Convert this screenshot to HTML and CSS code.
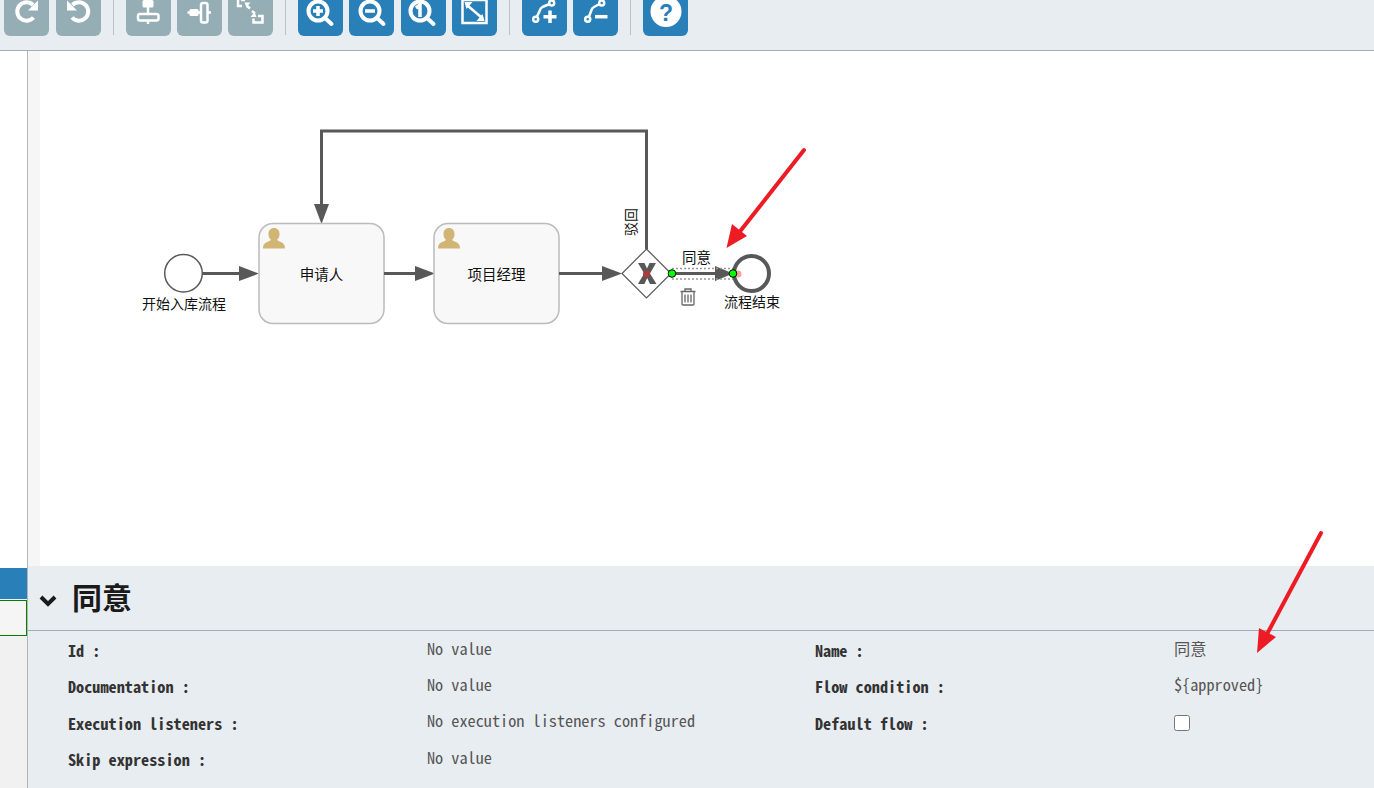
FILE: index.html

```html
<!DOCTYPE html>
<html lang="en">
<head>
    <meta charset="UTF-8">
    <meta name="viewport" content="width=device-width, initial-scale=1.0">
    <title>Process editor</title>
    <link rel="stylesheet" href="styles.css">
</head>

<body>
    <div class="toolbar">
        <button class="btn btn-gray btn-wide-gap">
            <svg viewBox="0 0 45 36"><path class="ic" d="M29.500 17.500a9.200 9.200 0 1 1 -.5-12.500"/><path class="ic-fill" d="M34 0.500v10h-10z"/></svg>
        </button>
        <button class="btn btn-gray">
            <svg viewBox="0 0 45 36"><path class="ic" d="M16 17.500a9.200 9.200 0 1 0 .5-12.500"/><path class="ic-fill" d="M11 0.500v10h10z"/></svg>
        </button>
        <span class="sep"></span>
        <button class="btn btn-gray">
            <svg viewBox="0 0 45 36"><path class="ic-thin" d="M22 0v24" stroke-width="3"/><rect class="ic-fill" x="16.500" y="0" width="11" height="7.500" rx="1.500"/><rect class="ic-gray" x="12" y="14" width="20.500" height="6.500" rx="2"/></svg>
        </button>
        <button class="btn btn-gray">
            <svg viewBox="0 0 45 36"><path class="ic-thin" d="M10.500 12.500h13M31 12.500h3"/><rect class="ic-fill" x="12.500" y="9" width="9" height="7" rx="1.500"/><rect class="ic-gray" x="24" y="3" width="6.500" height="19.500" rx="2"/></svg>
        </button>
        <button class="btn btn-gray">
            <svg viewBox="0 0 45 36"><path class="ic-thin" d="M10 0v6h4M13 0h4"/><path class="ic-thin" d="M30 16h4.500v6.500h-9v-4"/><path class="ic-thin" d="M19 6l3 2.500M24 11l3 2.500" stroke-width="2"/><path class="ic-fill" d="M16.500 2.500h6l-4 5zM28.500 17h-6l4-5z"/></svg>
        </button>
        <span class="sep"></span>
        <button class="btn btn-blue">
            <svg viewBox="0 0 45 36"><circle class="ic" cx="20" cy="11" r="9.500"/><path class="ic" d="M27 18l6.500 6" stroke-linecap="round"/><path class="ic-thick" d="M20 6v10M15 11h10"/></svg>
        </button>
        <button class="btn btn-blue">
            <svg viewBox="0 0 45 36"><circle class="ic" cx="21" cy="11" r="9.500"/><path class="ic" d="M28 18l6.500 6" stroke-linecap="round"/><path class="ic-thick" d="M16 11h10"/></svg>
        </button>
        <button class="btn btn-blue btn-nudge">
            <svg viewBox="0 0 45 36"><circle class="ic" cx="19" cy="11" r="9.500"/><path class="ic" d="M26 18l6.500 6" stroke-linecap="round"/><path class="ic-thick" d="M15 8l4-3v12" stroke-width="3"/></svg>
        </button>
        <button class="btn btn-blue">
            <svg viewBox="0 0 45 36"><rect class="ic-thin" x="10.500" y="0" width="24" height="23" stroke-width="2"/><path class="ic-thin" d="M16 6l13 11"/><path class="ic-fill" d="M12.500 2h8l-6 7zM32.500 21h-8l6-7z"/></svg>
        </button>
        <span class="sep"></span>
        <button class="btn btn-blue">
            <svg viewBox="0 0 45 36"><path class="ic-thin" d="M27.500 4L20.500 7q-2 1-2.500 3L15 16.500"/><circle class="ic-thin" cx="29.700" cy="3" r="2.500"/><circle class="ic-thin" cx="13.700" cy="19.300" r="2.500"/><path class="ic-thick" d="M28 10.500v12.500M21.500 16.700h13"/></svg>
        </button>
        <button class="btn btn-blue">
            <svg viewBox="0 0 45 36"><path class="ic-thin" d="M26.500 4L21 7q-2 1-2.500 3L16 16.500"/><circle class="ic-thin" cx="28.700" cy="3" r="2.500"/><circle class="ic-thin" cx="14.700" cy="19.300" r="2.500"/><path class="ic-thick" d="M22 16.700h12.500"/></svg>
        </button>
        <span class="sep"></span>
        <button class="btn btn-blue">
            <svg viewBox="0 0 45 36"><circle class="ic-fill" cx="23" cy="11.500" r="15.500"/><text class="help-mark" x="23" y="21">?</text></svg>
        </button>
    </div>

    <div class="main">
        <div class="palette">
            <div class="palette-space"></div>
            <div class="palette-head"></div>
            <div class="palette-item"></div>
        </div>

        <div class="workspace">
            <div class="canvas">
                <div class="ruler"></div>
                <svg class="diagram" viewBox="40 51 1334 515">
                    <!-- return flow -->
                    <path class="flow" d="M646.500 249V131H321.500V206"/>
                    <path class="head" d="M314 204h15l-7.500 20z"/>
                    <text class="label" transform="translate(636 222) rotate(-90)" x="0" y="0">驳回</text>

                    <!-- start -->
                    <circle class="start" cx="183.500" cy="273.300" r="18.800"/>
                    <text class="label" x="184" y="309">开始入库流程</text>
                    <path class="flow" d="M203 273.500H241"/>
                    <path class="head" d="M239 266v15l20-7.500z"/>

                    <!-- tasks -->
                    <rect class="task" x="259" y="223.500" width="125" height="100" rx="14"/>
                    <path class="person" d="M263 248.500c0-4 2-6 5.500-7l2.500-1.500c-2-2-2.500-3.500-2.500-6 0-3.500 2-6 5.500-6s5.500 2.500 5.500 6c0 2.500-.5 4-2.500 6l2.500 1.500c3.500 1 5.500 3 5.500 7z"/>
                    <text class="label label-task" x="321.500" y="280">申请人</text>
                    <path class="flow" d="M384 273.500H417"/>
                    <path class="head" d="M415 266v15l20-7.500z"/>

                    <rect class="task" x="434" y="223.500" width="125" height="100" rx="14"/>
                    <path class="person" d="M438 248.500c0-4 2-6 5.500-7l2.500-1.500c-2-2-2.500-3.500-2.500-6 0-3.500 2-6 5.500-6s5.500 2.500 5.500 6c0 2.500-.5 4-2.500 6l2.500 1.500c3.500 1 5.500 3 5.500 7z"/>
                    <text class="label label-task" x="496.500" y="280">项目经理</text>
                    <path class="flow" d="M559 273.500H604"/>
                    <path class="head" d="M602 266v15l20-7.500z"/>

                    <!-- gateway -->
                    <path class="gateway" d="M646.500 249L671 273.500 646.500 298 622 273.500z"/>
                    <path class="head" d="M638 263h6.500l2.500 5.500 2.500-5.500h6.500l-6 10.500 6.500 10.500h-6.500l-2.800-6-2.800 6h-6.500l6.300-10.500z"/>
                    <circle class="dot-red" cx="646.500" cy="274" r="3.500"/>

                    <!-- selected flow -->
                    <path class="flow" d="M672 273.500H717"/>
                    <path class="head" d="M715 266v15l18-7.500z"/>
                    <path class="select" d="M672 268.500H733M672 279H733"/>
                    <circle class="end" cx="751.500" cy="273.500" r="17.500"/>
                    <circle class="dot-pale" cx="738" cy="274" r="3.500"/>
                    <circle class="dot-green" cx="672" cy="273.500" r="3.800"/>
                    <circle class="dot-green" cx="733" cy="273.500" r="3.800"/>
                    <text class="label label-task" x="696.500" y="263">同意</text>
                    <text class="label" x="752" y="307">流程结束</text>

                    <!-- trash -->
                    <path class="trash" d="M680.500 291.500h15M685 291.500v-2.500h6v2.500M682 291.500v12.500q0 1 1 1h10q1 0 1-1v-12.500M685 294.500v8M688 294.500v8M691 294.500v8"/>
                </svg>
            </div>

            <div class="props">
                <div class="props-head">
                    <svg class="chevron" viewBox="0 0 18 13"><path d="M2 3l7 7 7-7"/></svg>
                    <h1>同意</h1>
                </div>
                <div class="props-grid">
                    <div class="prop-name">Id :</div>
                    <div class="prop-value">No value</div>
                    <div class="prop-name">Name :</div>
                    <div class="prop-value">同意</div>

                    <div class="prop-name">Documentation :</div>
                    <div class="prop-value">No value</div>
                    <div class="prop-name">Flow condition :</div>
                    <div class="prop-value">${approved}</div>

                    <div class="prop-name">Execution listeners :</div>
                    <div class="prop-value">No execution listeners configured</div>
                    <div class="prop-name">Default flow :</div>
                    <div class="prop-value"><input type="checkbox"></div>

                    <div class="prop-name">Skip expression :</div>
                    <div class="prop-value">No value</div>
                </div>
            </div>
        </div>
    </div>

    <!-- annotations drawn on top of the screenshot -->
    <svg class="notes" viewBox="0 0 1374 788">
        <path class="note-line" d="M804 150L738 234"/>
        <path class="note-head" d="M726.500 248L732 224 747 236z"/>
        <path class="note-line" d="M1321 533L1266 636"/>
        <path class="note-head" d="M1257 653L1259 628 1276 637z"/>
    </svg>
</body>
</html>
```

FILE: styles.css

```css
html, body {
    margin: 0;
    height: 788px;
    overflow: hidden;
    background-color: #fff;
    font-family: "Noto Sans Mono CJK SC", "DejaVu Sans Mono", monospace;
}

.toolbar {
    display: flex;
    align-items: flex-start;
    gap: 6px;
    height: 50px;
    padding-left: 4px;
    background-color: #e8edf1;
    border-bottom: 1px solid #a4acb9;
}

.btn {
    width: 45px;
    height: 36px;
    padding: 0;
    border: none;
    border-radius: 0 0 6px 6px;
}

.btn svg {
    display: block;
    width: 45px;
    height: 36px;
}

.btn-gray {
    background-color: #95adb4;
}

.btn-blue {
    background-color: #2980b9;
}

.btn-wide-gap {
    margin-right: 1px;
}

.btn-nudge {
    margin-left: 1px;
}

.sep {
    width: 1px;
    height: 35px;
    margin: 0 6px;
    background-color: #b9c2c8;
}

.ic, .ic-thin, .ic-thick {
    fill: none;
    stroke: #fff;
}

.ic {
    stroke-width: 4;
}

.ic-thin {
    stroke-width: 2.5;
}

.ic-thick {
    stroke-width: 3.5;
}

.ic-fill {
    fill: #fff;
}

.ic-gray {
    fill: #95adb4;
    stroke: #fff;
    stroke-width: 2.5;
}

.help-mark {
    fill: #2980b9;
    font-family: "Liberation Sans", sans-serif;
    font-size: 23px;
    font-weight: bold;
    text-anchor: middle;
}

.main {
    display: flex;
    height: 737px;
}

.palette {
    width: 27px;
    background-color: #f1f1f1;
    border-right: 1px solid #b5b5b5;
}

.palette-space {
    height: 517px;
    background-color: #fff;
}

.palette-head {
    height: 31px;
    margin-bottom: 1px;
    background-color: #2980b9;
}

.palette-item {
    height: 34px;
    background-color: #f5f5f5;
    border: 1px solid #008000;
    border-left: none;
}

.workspace {
    flex: 1;
    display: flex;
    flex-direction: column;
}

.canvas {
    display: flex;
    height: 515px;
}

.ruler {
    width: 12px;
    background-color: #f6f6f6;
}

.diagram {
    display: block;
    width: 1334px;
    height: 515px;
}

.flow {
    fill: none;
    stroke: #585858;
    stroke-width: 3;
}

.head {
    fill: #585858;
}

.start {
    fill: #fff;
    stroke: #585858;
    stroke-width: 1.5;
}

.end {
    fill: #fff;
    stroke: #585858;
    stroke-width: 4;
}

.task {
    fill: #f8f8f8;
    stroke: #bbb;
    stroke-width: 1.5;
}

.person {
    fill: #d1b574;
}

.gateway {
    fill: #fff;
    stroke: #585858;
    stroke-width: 1.2;
}

.dot-red {
    fill: #b03a3a;
}

.dot-pale {
    fill: #f5a0a0;
}

.dot-green {
    fill: #0f0;
    stroke: #000;
    stroke-width: 1;
}

.select {
    fill: none;
    stroke: #999;
    stroke-width: 1.5;
    stroke-dasharray: 2 2;
}

.trash {
    fill: none;
    stroke: #666;
    stroke-width: 1.3;
}

.label {
    fill: #111;
    font-family: "Noto Sans CJK SC", sans-serif;
    font-size: 14px;
    text-anchor: middle;
}

.label-task {
    font-size: 14.5px;
}

.props {
    flex: 1;
    background-color: #e8edf1;
}

.props-head {
    display: flex;
    align-items: center;
    gap: 15px;
    height: 64px;
    padding-left: 11px;
    border-bottom: 1px solid #a4acb9;
}

.chevron {
    width: 18px;
    height: 13px;
    margin-top: 4px;
}

.chevron path {
    fill: none;
    stroke: #1a1a1a;
    stroke-width: 4;
}

.props-head h1 {
    margin: 0 0 4px;
    color: #1a1a1a;
    font-family: "Noto Sans CJK SC", sans-serif;
    font-size: 30px;
    font-weight: bold;
}

.props-grid {
    display: grid;
    grid-template-columns: 359px 388px 359px 1fr;
    grid-auto-rows: 36.3px;
    align-items: center;
    padding: 1px 0 0 40px;
    font-size: 16.25px;
}

.prop-name {
    color: #333;
    font-weight: bold;
}

.prop-value {
    padding-bottom: 5px;
    color: #555;
}

.prop-value input {
    display: block;
    width: 16px;
    height: 16px;
    margin: 5px 0 0;
}

.notes {
    position: absolute;
    left: 0;
    top: 0;
    width: 1374px;
    height: 788px;
    pointer-events: none;
}

.note-line {
    fill: none;
    stroke: #ed1c24;
    stroke-width: 4;
    stroke-linecap: round;
}

.note-head {
    fill: #ed1c24;
}
```
